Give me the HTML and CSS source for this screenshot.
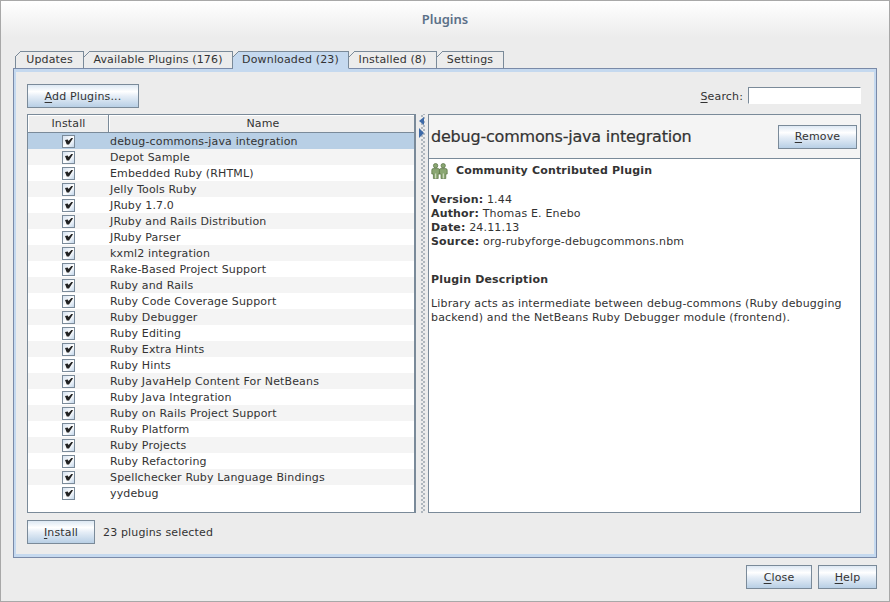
FILE: index.html
```html
<!DOCTYPE html>
<html lang="en">
<head>
    <meta charset="UTF-8">
    <title>Plugins</title>
    <link rel="stylesheet" href="styles.css">
</head>
<body>
    <div class="window">
        <div class="title">Plugins</div>
        <div class="tabs">
            <div class="tab tab-updates">Updates</div>
            <div class="tab tab-available">Available Plugins (176)</div>
            <div class="tab tab-downloaded active">Downloaded (23)</div>
            <div class="tab tab-installed">Installed (8)</div>
            <div class="tab tab-settings">Settings</div>
        </div>
        <div class="panel">
            <div class="toolbar">
                <button class="btn btn-add"><u>A</u>dd Plugins...</button>
                <label class="search"><span class="search-label"><u>S</u>earch:</span><input type="text"></label>
            </div>
            <div class="split">
                <div class="table">
                    <div class="thead">
                        <div class="th th-install">Install</div>
                        <div class="th th-name">Name</div>
                    </div>
                    <div class="row selected"><span class="check"></span><span class="name">debug-commons-java integration</span></div>
                    <div class="row"><span class="check"></span><span class="name">Depot Sample</span></div>
                    <div class="row"><span class="check"></span><span class="name">Embedded Ruby (RHTML)</span></div>
                    <div class="row"><span class="check"></span><span class="name">Jelly Tools Ruby</span></div>
                    <div class="row"><span class="check"></span><span class="name">JRuby 1.7.0</span></div>
                    <div class="row"><span class="check"></span><span class="name">JRuby and Rails Distribution</span></div>
                    <div class="row"><span class="check"></span><span class="name">JRuby Parser</span></div>
                    <div class="row"><span class="check"></span><span class="name">kxml2 integration</span></div>
                    <div class="row"><span class="check"></span><span class="name">Rake-Based Project Support</span></div>
                    <div class="row"><span class="check"></span><span class="name">Ruby and Rails</span></div>
                    <div class="row"><span class="check"></span><span class="name">Ruby Code Coverage Support</span></div>
                    <div class="row"><span class="check"></span><span class="name">Ruby Debugger</span></div>
                    <div class="row"><span class="check"></span><span class="name">Ruby Editing</span></div>
                    <div class="row"><span class="check"></span><span class="name">Ruby Extra Hints</span></div>
                    <div class="row"><span class="check"></span><span class="name">Ruby Hints</span></div>
                    <div class="row"><span class="check"></span><span class="name">Ruby JavaHelp Content For NetBeans</span></div>
                    <div class="row"><span class="check"></span><span class="name">Ruby Java Integration</span></div>
                    <div class="row"><span class="check"></span><span class="name">Ruby on Rails Project Support</span></div>
                    <div class="row"><span class="check"></span><span class="name">Ruby Platform</span></div>
                    <div class="row"><span class="check"></span><span class="name">Ruby Projects</span></div>
                    <div class="row"><span class="check"></span><span class="name">Ruby Refactoring</span></div>
                    <div class="row"><span class="check"></span><span class="name">Spellchecker Ruby Language Bindings</span></div>
                    <div class="row"><span class="check"></span><span class="name">yydebug</span></div>
                </div>
                <div class="divider">
                    <span class="arrow-left"></span>
                    <span class="arrow-right"></span>
                </div>
                <div class="details">
                    <div class="details-head">
                        <div class="details-title">debug-commons-java integration</div>
                        <button class="btn btn-remove"><u>R</u>emove</button>
                    </div>
                    <div class="details-body">
                        <div class="community">
                            <svg class="people" width="17" height="16" viewBox="0 0 17 16">
                                <g fill="#8aa672" stroke="#56703f" stroke-width="0.7">
                                    <circle cx="4.6" cy="2.7" r="2.2"/>
                                    <circle cx="12.2" cy="2.7" r="2.2"/>
                                    <path d="M2 5.6h5.2q1.4 0 1.4 1.6V11H7.2v4.6H2.4V11H.8V7.2q0-1.6 1.2-1.6z"/>
                                    <path d="M9.6 5.6h5.2q1.4 0 1.4 1.6V11h-1.4v4.6H10V11H8.4V7.2q0-1.6 1.2-1.6z"/>
                                </g>
                                <path d="M4.7 10.5v5M12.3 10.5v5" stroke="#e4ecd8" stroke-width="0.9"/>
                            </svg>
                            <b>Community Contributed Plugin</b>
                        </div>
                        <div class="meta">
                            <div><b>Version:</b> 1.44</div>
                            <div><b>Author:</b> Thomas E. Enebo</div>
                            <div><b>Date:</b> 24.11.13</div>
                            <div><b>Source:</b> org-rubyforge-debugcommons.nbm</div>
                        </div>
                        <div class="desc-title"><b>Plugin Description</b></div>
                        <p class="desc">Library acts as intermediate between debug-commons (Ruby debugging backend) and the NetBeans Ruby Debugger module (frontend).</p>
                    </div>
                </div>
            </div>
            <div class="install-bar">
                <button class="btn btn-install"><u>I</u>nstall</button>
                <span class="selected-count">23 plugins selected</span>
            </div>
        </div>
        <div class="footer">
            <button class="btn btn-close"><u>C</u>lose</button>
            <button class="btn btn-help"><u>H</u>elp</button>
        </div>
    </div>
</body>
</html>
```

FILE: styles.css
```css
* { box-sizing: border-box; }
body { margin: 0; background: #ececec; font-family: "DejaVu Sans", sans-serif; font-size: 11px; color: #333; }
u { text-decoration: underline; text-underline-offset: 2px; }

.window {
    width: 890px;
    height: 602px;
    display: flex;
    flex-direction: column;
    border: 1px solid #a8a8a8;
    background: #ececec;
}
.title {
    height: 50px;
    padding-top: 9px;
    text-align: center;
    font-family: "Noto Sans", sans-serif;
    font-size: 13px;
    font-weight: 600;
    color: #5b7088;
    background: linear-gradient(#fff, #ececec 36px);
}

/* tabs */
.tabs { display: flex; height: 17px; padding-left: 14px; }
.tab {
    position: relative;
    height: 18px;
    line-height: 16px;
    text-align: center;
    letter-spacing: 0.15px;
    border: 1px solid #7a8a99;
    border-left-width: 0;
    border-bottom-color: #7a8aa8;
}
.tab::before {
    content: "";
    position: absolute;
    left: 0;
    top: -1px;
    width: 6px;
    height: 6px;
    background: linear-gradient(135deg, #ececec 0 42%, #7a8a99 42% 58%, transparent 58%);
}
.tab-updates { width: 69px; border-left-width: 1px; }
.tab-updates::before { left: -1px; }
.tab-available { width: 149px; }
.tab-downloaded { width: 116px; }
.tab-installed { width: 88px; }
.tab-settings { width: 67px; }
.tab.active { background: #c5d9ef; border-bottom-color: #c5d9ef; z-index: 1; }

/* main panel */
.panel {
    width: 864px;
    height: 490px;
    margin-left: 12px;
    padding: 15px 15px 0 13px;
    border: 1px solid #7a8aa8;
    box-shadow: inset 2px 0 0 #c5d9ef, inset -2px 0 0 #c5d9ef, inset 0 -3px 0 #c5d9ef, inset 0 3px 0 #c5d9ef;
}
.toolbar { display: flex; justify-content: space-between; align-items: flex-start; height: 30px; }
.search { display: flex; align-items: center; gap: 5px; height: 17px; margin-top: 3px; letter-spacing: 0.15px; }
.search-label { padding-top: 2px; }
.search input {
    width: 113px;
    height: 17px;
    margin: 0;
    padding: 0;
    background: #fff;
    border: 1px solid #7a8a99;
    border-right-color: #fff;
    border-bottom-color: #fff;
    outline: none;
}

.btn {
    display: block;
    height: 24px;
    padding: 0;
    font: inherit;
    letter-spacing: 0.15px;
    color: #333;
    border: 1px solid #7a8a99;
    background: linear-gradient(#dde8f3, #fff 30%, #e6eef7 50%, #b8cfe5);
}
.btn-add { width: 112px; }
.btn-remove { width: 79px; }
.btn-install { width: 68px; }
.btn-close { width: 66px; }
.btn-help { width: 59px; }

.split { display: flex; height: 399px; }

/* plugin table */
.table { width: 389px; background: #fff; border: 1px solid #7a8a99; border-right-width: 2px; }
.thead { display: flex; height: 18px; border-bottom: 1px solid #7a8a99; }
.th { line-height: 17px; text-align: center; letter-spacing: 0.15px; background: #eee; box-shadow: inset 1px 1px 0 #fff; }
.th-install { width: 81px; padding-left: 1px; border-right: 1px solid #7a8a99; }
.th-name { flex: 1; padding-left: 3px; }
.row { display: flex; align-items: center; height: 16px; letter-spacing: 0.15px; }
.row:nth-child(odd) { background: #f4f4f4; }
.row.selected { background: #b8cfe5; }
.check {
    position: relative;
    width: 13px;
    height: 13px;
    margin-left: 34px;
    border: 1px solid #7a8a99;
    background: linear-gradient(135deg, #d5e2f0, #fff 55%, #c2d5e9);
}
.check::after {
    content: "";
    position: absolute;
    left: 2px;
    top: 2px;
    width: 8px;
    height: 7px;
    background: #222;
    clip-path: polygon(0 35%, 35% 30%, 45% 50%, 85% 0, 100% 10%, 50% 100%, 22% 100%);
}
.name { margin-left: 35px; white-space: nowrap; }

/* divider */
.divider {
    width: 12px;
    padding-left: 3px;
    display: flex;
    flex-direction: column;
    background:
        radial-gradient(circle, #8e9aa6 0.6px, transparent 0.9px) 5px 24px / 2px 4px repeat-y,
        radial-gradient(circle, #8e9aa6 0.6px, transparent 0.9px) 7px 26px / 2px 4px repeat-y;
}
.arrow-left, .arrow-right { display: block; width: 0; height: 0; border-top: 4px solid transparent; border-bottom: 4px solid transparent; }
.arrow-left { margin-top: 3px; border-right: 5px solid #3d6aa8; }
.arrow-right { margin-top: 3px; border-top-width: 5px; border-bottom-width: 5px; border-left: 5px solid #3d6aa8; }

/* detail pane */
.details { width: 433px; border: 1px solid #7a8a99; display: flex; flex-direction: column; background: #fff; }
.details-head {
    display: flex;
    justify-content: space-between;
    align-items: center;
    height: 44px;
    padding: 0 3px 0 2px;
    background: #f4f4f4;
    border-bottom: 1px solid #7a8a99;
}
.details-title { font-size: 16px; letter-spacing: -0.2px; -webkit-text-stroke: 0.2px #333; }
.details-body { padding: 4px 2px; letter-spacing: 0.17px; line-height: 14px; }
.community { display: flex; align-items: center; gap: 8px; height: 16px; }
.meta { margin-top: 14px; }
.desc-title { margin-top: 24px; }
.desc { margin: 10px 0 0; line-height: 14px; }

.install-bar { display: flex; align-items: center; gap: 8px; margin-top: 7px; }
.selected-count { letter-spacing: 0.15px; }

.footer { display: flex; justify-content: flex-end; gap: 6px; padding: 7px 12px 0 0; }
```
